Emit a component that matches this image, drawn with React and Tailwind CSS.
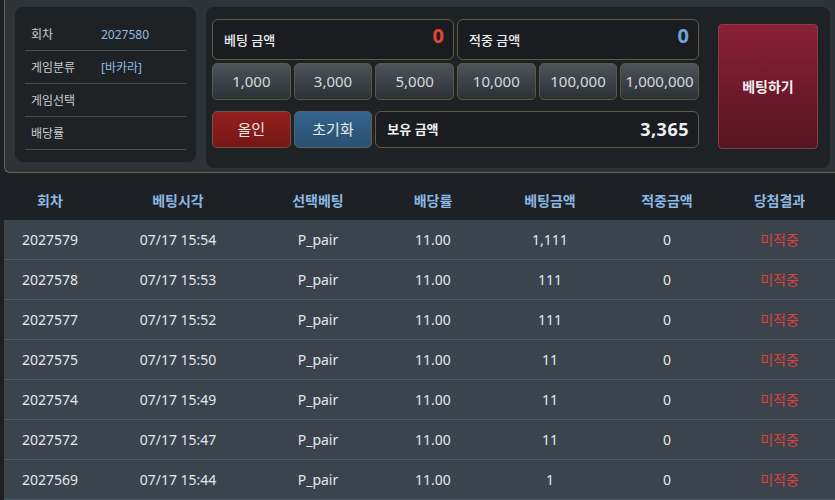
import React from "react";

const rows = [
  ["2027579", "07/17 15:54", "P_pair", "11.00", "1,111", "0", "미적중"],
  ["2027578", "07/17 15:53", "P_pair", "11.00", "111", "0", "미적중"],
  ["2027577", "07/17 15:52", "P_pair", "11.00", "111", "0", "미적중"],
  ["2027575", "07/17 15:50", "P_pair", "11.00", "11", "0", "미적중"],
  ["2027574", "07/17 15:49", "P_pair", "11.00", "11", "0", "미적중"],
  ["2027572", "07/17 15:47", "P_pair", "11.00", "11", "0", "미적중"],
  ["2027569", "07/17 15:44", "P_pair", "11.00", "1", "0", "미적중"],
];

const headers = ["회차", "베팅시각", "선택베팅", "배당률", "베팅금액", "적중금액", "당첨결과"];

const info = [
  ["회차", "2027580"],
  ["게임분류", "[바카라]"],
  ["게임선택", ""],
  ["배당률", ""],
];

const chips = ["1,000", "3,000", "5,000", "10,000", "100,000", "1,000,000"];

export default function App() {
  return (
    <div
      className="min-h-[500px] h-[500px] overflow-hidden bg-[#1d2025] pl-[4px]"
      style={{ fontFamily: '"Noto Sans", "Noto Sans CJK KR", sans-serif' }}
    >
      <div className="flex h-[173px] gap-[10px] rounded-bl-md border-b border-l border-[#66634a] bg-[#2d3337] pl-[10px] pr-[5px] pt-[7px]">
        <div className="h-[155px] w-[181px] rounded-lg bg-[#1f2225] px-[10px] pt-[11px]">
          {info.map(([k, v]) => (
            <div
              key={k}
              className="flex h-[33px] items-center border-b border-[#4d5049] pl-[6px] pt-[2px] text-[12px]"
            >
              <span className="w-[70px] text-[#c9cdd0]">{k}</span>
              <span className="text-[#8fbbe0]">{v}</span>
            </div>
          ))}
        </div>
        <div className="flex h-[161px] flex-1 rounded-lg bg-[#1f2225] pl-[6px] pt-[12px]">
          <div className="grid w-[487px] grid-cols-6 gap-x-[3px] content-start">
            <div className="col-span-3 flex h-[41px] justify-between rounded-md border border-[#5f5c45] bg-[#1a1c1f] pl-[11px] pr-[9px]">
              <span className="mt-[11px] text-[13px] font-medium text-[#eceff1]">베팅 금액</span>
              <span className="mt-[1px] text-[20px] font-bold text-[#e0453b]">0</span>
            </div>
            <div className="col-span-3 flex h-[41px] justify-between rounded-md border border-[#5f5c45] bg-[#1a1c1f] pl-[11px] pr-[9px]">
              <span className="mt-[11px] text-[13px] font-medium text-[#eceff1]">적중 금액</span>
              <span className="mt-[1px] text-[20px] font-bold text-[#6ea5dc]">0</span>
            </div>
            {chips.map((c) => (
              <div
                key={c}
                className="mt-[3px] flex h-[37px] items-center justify-center rounded-[5px] border border-[#5a5a4a] bg-gradient-to-b from-[#4d5359] to-[#2c3136] text-[15px] text-[#d6dadd]"
              >
                {c}
              </div>
            ))}
            <div className="mt-[11px] flex h-[37px] items-center justify-center rounded-[5px] border border-[#6b5a45] bg-gradient-to-b from-[#921f1c] to-[#761716] text-[15px] text-[#f0e6e4]">
              올인
            </div>
            <div className="mt-[11px] flex h-[37px] items-center justify-center rounded-[5px] border border-[#56606a] bg-gradient-to-b from-[#35648d] to-[#28506f] text-[15px] text-[#e6ecf1]">
              초기화
            </div>
            <div className="col-span-4 mt-[11px] flex h-[37px] items-center justify-between rounded-md border border-[#5f5c45] bg-[#1a1c1f] pl-[11px] pr-[9px]">
              <span className="text-[13px] font-bold text-[#f1f2f3]">보유 금액</span>
              <span className="text-[18px] font-bold tracking-[0.5px] text-[#eef0f1]">3,365</span>
            </div>
          </div>
          <div className="ml-[19px] mt-[5px] flex h-[125px] w-[100px] items-center justify-center rounded-[4px] border border-[#8c3a48] bg-gradient-to-b from-[#8a2036] to-[#561522] text-[14px] font-bold text-[#f4eef0]">
            베팅하기
          </div>
        </div>
      </div>

      <div className="mt-[7px]">
        <div className="grid h-[40px] grid-cols-[92px_164px_116px_114px_120px_114px_111px] items-center text-[14px] font-bold text-[#8cb8e2]">
          {headers.map((h) => (
            <div key={h} className="text-center">
              {h}
            </div>
          ))}
        </div>
        {rows.map((r) => (
          <div
            key={r[0]}
            className="grid h-[40px] grid-cols-[92px_164px_116px_114px_120px_114px_111px] items-center border-b border-[#485a68] bg-[#3b434c] text-[14px] text-[#e3e8ec]"
          >
            {r.map((c, i) => (
              <div
                key={i}
                className={i === 6 ? "text-center text-[#dc4139]" : "text-center"}
              >
                {c}
              </div>
            ))}
          </div>
        ))}
      </div>
    </div>
  );
}
